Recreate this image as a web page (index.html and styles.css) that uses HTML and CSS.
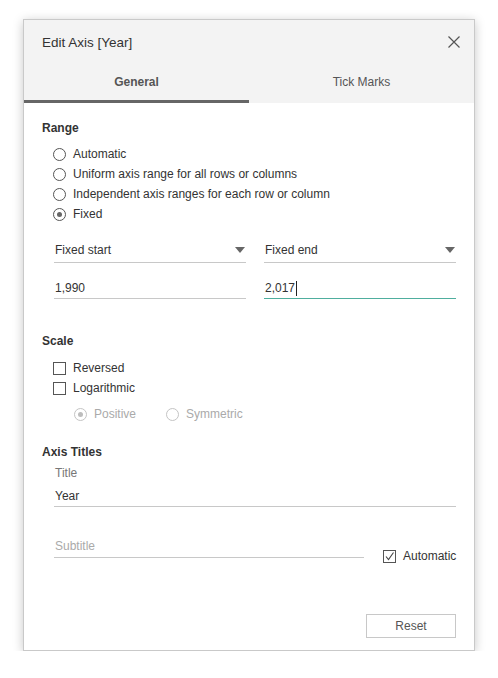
FILE: index.html
```html
<!DOCTYPE html>
<html>
<head>
<meta charset="utf-8">
<link rel="stylesheet" href="styles.css">
</head>
<body>
<div class="dialog">
  <div class="header">
    <div class="title-row">
      <span class="title">Edit Axis [Year]</span>
      <svg class="close" width="14" height="14" viewBox="0 0 14 14"><path d="M1.5 1.5 L12.5 12.5 M12.5 1.5 L1.5 12.5" stroke="#555" stroke-width="1.2" fill="none"/></svg>
    </div>
    <div class="tabs">
      <div class="tab active">General</div>
      <div class="tab">Tick Marks</div>
    </div>
  </div>
  <div class="content">
    <div class="heading">Range</div>
    <div class="options">
      <div class="opt"><span class="radio"></span>Automatic</div>
      <div class="opt"><span class="radio"></span>Uniform axis range for all rows or columns</div>
      <div class="opt"><span class="radio"></span>Independent axis ranges for each row or column</div>
      <div class="opt"><span class="radio on"></span>Fixed</div>
    </div>
    <div class="pair pair-dd">
      <div class="field dd"><span>Fixed start</span><span class="arrow"></span></div>
      <div class="field dd"><span>Fixed end</span><span class="arrow"></span></div>
    </div>
    <div class="pair pair-in">
      <div class="field input"><span>1,990</span></div>
      <div class="field input focus"><span>2,017</span><span class="caret"></span></div>
    </div>

    <div class="heading scale-h">Scale</div>
    <div class="options">
      <div class="opt"><span class="check"></span>Reversed</div>
      <div class="opt"><span class="check"></span>Logarithmic</div>
    </div>
    <div class="sub-opts">
      <div class="opt disabled"><span class="radio on"></span>Positive</div>
      <div class="opt disabled"><span class="radio"></span>Symmetric</div>
    </div>

    <div class="heading titles-h">Axis Titles</div>
    <div class="label">Title</div>
    <div class="field input wide"><span>Year</span></div>
    <div class="sub-row">
      <div class="field subtitle"><span class="ph">Subtitle</span></div>
      <div class="opt auto"><span class="check checked"><svg width="11" height="11" viewBox="0 0 11 11"><path d="M2 5.5 L4.5 8.5 L9.5 1.5" stroke="#444" stroke-width="1.1" fill="none"/></svg></span>Automatic</div>
    </div>
    <div class="footer">
      <button class="btn">Reset</button>
    </div>
  </div>
</div>
</body>
</html>
```

FILE: styles.css
```css
html, body {
  margin: 0;
  padding: 0;
  background: #ffffff;
}
body {
  font-family: "Liberation Sans", Arial, sans-serif;
  font-size: 12px;
  color: #333;
}
.dialog {
  margin: 19px 0 0 23px;
  width: 450px;
  height: 630px;
  border: 1px solid #c9c9c9;
  background: #fff;
  box-shadow: 0 2px 10px rgba(0, 0, 0, 0.22);
  display: flex;
  flex-direction: column;
}
.header {
  background: #f3f3f3;
}
.title-row {
  height: 44px;
  display: flex;
  align-items: center;
  justify-content: space-between;
  padding: 0 13px 0 18px;
}
.title {
  font-size: 13.5px;
  color: #333;
  padding-top: 1px;
}
.close {
  display: block;
}
.tabs {
  display: flex;
  height: 39px;
}
.tab {
  flex: 1;
  display: flex;
  align-items: center;
  justify-content: center;
  color: #555;
  box-sizing: border-box;
  border-bottom: 3px solid transparent;
}
.tab.active {
  font-weight: bold;
  border-bottom-color: #666;
}
.content {
  flex: 1;
  padding: 17px 18px 0 18px;
  display: flex;
  flex-direction: column;
}
.heading {
  font-weight: bold;
  line-height: 16px;
  height: 16px;
}
.options {
  margin: 8px 0 0 11px;
  display: flex;
  flex-direction: column;
}
.opt {
  height: 20px;
  display: flex;
  align-items: center;
  gap: 7px;
  white-space: nowrap;
}
.radio {
  width: 11px;
  height: 11px;
  border: 1px solid #555;
  border-radius: 50%;
  display: flex;
  align-items: center;
  justify-content: center;
  flex: none;
}
.radio.on::after {
  content: "";
  width: 5px;
  height: 5px;
  border-radius: 50%;
  background: #666;
}
.check {
  width: 11px;
  height: 11px;
  border: 1px solid #555;
  flex: none;
  display: flex;
  align-items: center;
  justify-content: center;
}
.check svg {
  display: block;
}
.pair {
  display: flex;
  gap: 18px;
  margin-left: 12px;
}
.pair-dd {
  margin-top: 14px;
}
.pair-in {
  margin-top: 11px;
}
.field {
  flex: 1;
  height: 24px;
  border-bottom: 1px solid #c8c8c8;
  display: flex;
  align-items: center;
  justify-content: space-between;
  padding: 0 1px;
  box-sizing: content-box;
}
.field.input {
  align-items: flex-end;
  justify-content: flex-start;
  height: 21px;
  padding-bottom: 3px;
}
.field.focus {
  border-bottom-color: #4fae9e;
}
.caret {
  width: 1px;
  height: 15px;
  background: #222;
  margin-left: 1px;
  margin-bottom: -1px;
}
.arrow {
  width: 0;
  height: 0;
  border-left: 5px solid transparent;
  border-right: 5px solid transparent;
  border-top: 6px solid #666;
}
.scale-h {
  margin-top: 34px;
}
.scale-h + .options {
  margin-top: 9px;
}
.sub-opts {
  margin: 6px 0 0 32px;
  display: flex;
  gap: 30px;
}
.opt.disabled {
  color: #aaa;
}
.opt.disabled .radio {
  border-color: #c4c4c4;
}
.opt.disabled .radio.on::after {
  background: #bdbdbd;
}
.titles-h {
  margin-top: 20px;
}
.label {
  margin: 5px 0 0 13px;
  line-height: 16px;
  color: #777;
}
.field.wide {
  flex: none;
  margin: 2px 0 0 12px;
  height: 20px;
  padding-bottom: 3px;
}
.sub-row {
  display: flex;
  align-items: flex-end;
  margin: 27px 0 0 12px;
  gap: 19px;
}
.field.subtitle {
  flex: none;
  width: 308px;
  height: 23px;
}
.ph {
  color: #aaa;
}
.opt.auto {
  gap: 7px;
  margin-bottom: -8px;
}
.footer {
  margin-top: auto;
  display: flex;
  justify-content: flex-end;
  padding-bottom: 12px;
}
.btn {
  width: 90px;
  height: 24px;
  border: 1px solid #c8c8c8;
  background: #fff;
  font-family: "Liberation Sans", Arial, sans-serif;
  font-size: 12px;
  color: #555;
  padding: 0;
}
```
